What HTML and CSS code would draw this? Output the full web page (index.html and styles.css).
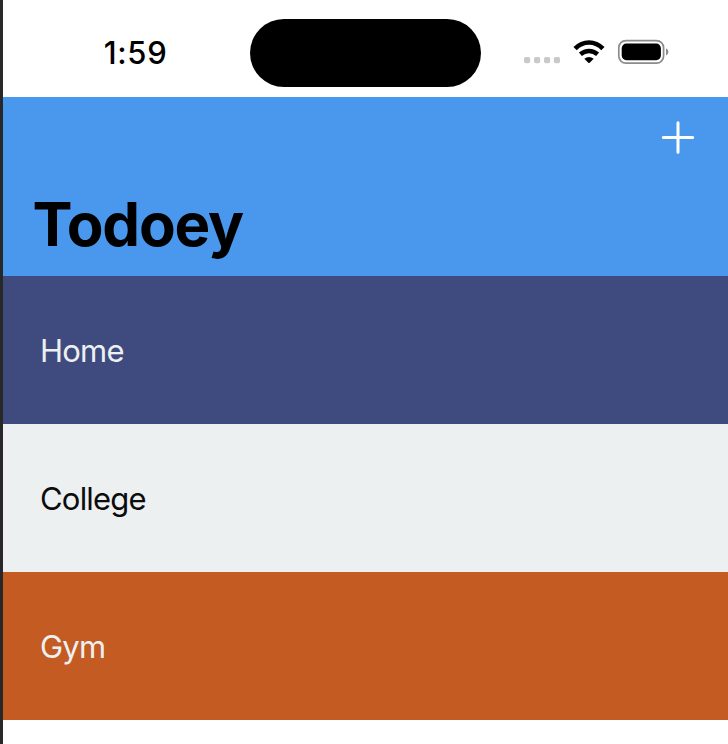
FILE: index.html
```html
<!DOCTYPE html>
<html lang="en">
<head>
<meta charset="utf-8">
<title>Todoey</title>
<link rel="stylesheet" href="styles.css">
</head>
<body>
<div class="phone">
  <div class="status">
    <div class="time"><span>1:59</span></div>
    <div class="island"></div>
    <div class="indicators">
      <svg width="150" height="30" viewBox="521 37 150 30" aria-hidden="true">
        <g fill="#c9c9c9">
          <rect x="524" y="57" width="6.2" height="6.2" rx="1.8"/>
          <rect x="534" y="57" width="6.2" height="6.2" rx="1.8"/>
          <rect x="544" y="57" width="6.2" height="6.2" rx="1.8"/>
          <rect x="553.8" y="57" width="6.2" height="6.2" rx="1.8"/>
        </g>
        <g fill="none" stroke="#000" stroke-width="4.5">
          <path d="M575.1 48.6Q581 42.4 589 42.4T602.9 48.6"/>
          <path d="M580.4 54.2Q584.2 50.9 589 50.9T597.6 54.2"/>
        </g>
        <path d="M584.3 58.8Q589 55.2 593.7 58.8L589.7 62.8Q589 63.4 588.3 62.8Z"/>
        <rect x="618.8" y="40.6" width="44.8" height="22.6" rx="7.2" fill="none" stroke="#8c8c8c" stroke-width="1.7"/>
        <rect x="621.7" y="43.6" width="39.2" height="16.6" rx="4.6"/>
        <path d="M666 48.2Q668.4 49.3 668.4 51.8T666 55.5Z" fill="#8c8c8c"/>
      </svg>
    </div>
  </div>
  <header class="header">
    <svg class="add" width="34" height="34" viewBox="0 0 34 34" role="img" aria-label="Add">
      <path d="M17 1.8V31.2M2.3 16.5H31.7"/>
    </svg>
    <h1><span>Todoey</span></h1>
  </header>
  <ul class="list">
    <li class="home"><span>Home</span></li>
    <li class="college"><span>College</span></li>
    <li class="gym"><span>Gym</span></li>
  </ul>
</div>
</body>
</html>
```
FILE: styles.css
```css
* { box-sizing: border-box; }
body {
  margin: 0;
  background: #fff;
  font-family: Inter, "Liberation Sans", sans-serif;
}
.phone {
  height: 744px;
  border-left: 3px solid #282828;
  overflow: hidden;
}
.status {
  display: flex;
  height: 97px;
  padding-top: 19px;
}
.time {
  width: 247.4px;
  padding-left: 100.7px;
  font-size: 31px;
  font-weight: 500;
  line-height: 67px;
  letter-spacing: 0.7px;
}
.island {
  width: 231px;
  height: 67.5px;
  border-radius: 34px;
  background: #000;
}
.indicators {
  margin-left: 39.6px;
  padding-top: 18px;
}
.indicators svg, .add { display: block; }
.header {
  height: 179.4px;
  padding: 24px 33px 0 30px;
  background: #4a98ee;
}
.add {
  margin-left: auto;
  fill: none;
  stroke: #fff;
  stroke-width: 3;
  stroke-linecap: round;
}
h1 {
  margin: 33px 0 0 -0.5px;
  font-size: 60px;
  font-weight: 700;
  line-height: 73px;
  letter-spacing: -1.2px;
}
.list {
  margin: 0;
  padding: 0;
  list-style: none;
}
.list li {
  height: 147.8px;
  padding-left: 37px;
  font-size: 31px;
  line-height: 149px;
  letter-spacing: -0.8px;
}
.home { background: #3f4b7e; color: #edf0f1; }
.college { background: #ecf0f1; color: #0c0c0c; }
.gym { background: #c45b22; color: #edf0f1; }
```
